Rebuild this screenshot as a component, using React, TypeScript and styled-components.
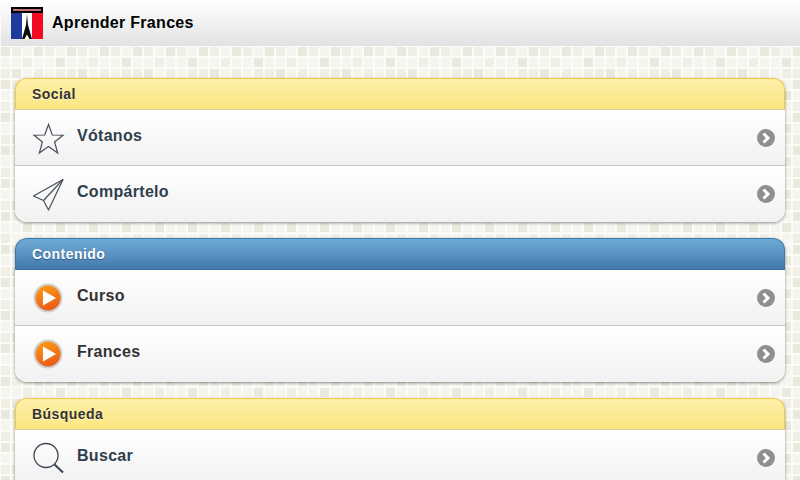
import * as React from 'react';
import styled, { createGlobalStyle } from 'styled-components';

const tile = (x: number, y: number, fill: string) =>
    `<rect x='${x * 11 + 1}' y='${y * 11 + 1}' width='9' height='9' fill='${fill}'/>`;

const darkCells = [[0, 0], [3, 0], [5, 1], [1, 2], [4, 3], [2, 4], [5, 4], [0, 3]];
const midCells = [[1, 0], [4, 0], [2, 1], [0, 2], [3, 2], [1, 3], [5, 2], [3, 5], [0, 5]];

const buildPattern = () => {
    let cells = '';
    for (let y = 0; y < 6; y++) {
        for (let x = 0; x < 6; x++) {
            const dark = darkCells.some(c => c[0] === x && c[1] === y);
            const mid = midCells.some(c => c[0] === x && c[1] === y);
            cells += tile(x, y, dark ? '#e9e9de' : mid ? '#efefe6' : '#f5f5ef');
        }
    }
    const svg = `<svg xmlns='http://www.w3.org/2000/svg' width='66' height='66'><rect width='66' height='66' fill='#fbfbf7'/>${cells}</svg>`;
    return `url("data:image/svg+xml,${encodeURIComponent(svg)}")`;
};

const GlobalStyle = createGlobalStyle`
    html, body {
        margin: 0;
        padding: 0;
        height: 100%;
        overflow: hidden;
    }
    body {
        font-family: "Liberation Sans", Arial, sans-serif;
    }
`;

const Page = styled.div<{ $pattern: string }>`
    width: 800px;
    height: 480px;
    overflow: hidden;
    background-color: #f5f5ef;
    background-image: ${p => p.$pattern};
    background-position: 0 46px;
`;

const Header = styled.header`
    height: 45px;
    margin-left: 1px;
    border-bottom: 1px solid #e2e2e2;
    background: linear-gradient(#ffffff, #e3e3e3);
    display: flex;
    align-items: center;
    padding-left: 10px;
    gap: 9px;
`;

const Title = styled.h1`
    margin: 0;
    font-size: 16px;
    font-weight: 700;
    color: #000;
    letter-spacing: 0.3px;
`;

const Content = styled.main`
    padding: 32px 15px 0;
    display: flex;
    flex-direction: column;
    gap: 16px;
`;

const Group = styled.section`
    border-radius: 12px;
    box-shadow: 0 1px 3px rgba(0, 0, 0, 0.45);
    background: #fff;
`;

const GroupHead = styled.div<{ $blue?: boolean }>`
    height: 30px;
    box-sizing: content-box;
    padding-left: 16px;
    display: flex;
    align-items: center;
    font-size: 14px;
    font-weight: 700;
    letter-spacing: 0.45px;
    border-radius: 12px 12px 0 0;
    border: 1px solid ${p => (p.$blue ? '#3f78a8' : '#f7c842')};
    border-bottom: 1px solid ${p => (p.$blue ? '#3d6f9c' : '#d8d2a8')};
    color: ${p => (p.$blue ? '#fff' : '#333')};
    text-shadow: ${p => (p.$blue ? '0 1px 1px #2a5a85' : '0 1px 0 #fff8c8')};
    background: ${p =>
        p.$blue
            ? 'linear-gradient(#6fabd8, #4479ab)'
            : 'linear-gradient(#fdf0a8, #fce681)'};
`;

const Row = styled.div`
    height: 55px;
    display: flex;
    align-items: center;
    padding: 0 10px 0 16px;
    background: linear-gradient(#ffffff, #f1f1f1);
    border-bottom: 1px solid #c4c4c4;

    &:last-child {
        border-bottom: none;
        height: 56px;
        border-radius: 0 0 12px 12px;
    }
`;

const IconSlot = styled.div`
    width: 34px;
    height: 34px;
    margin-right: 12px;
    display: flex;
    align-items: center;
    justify-content: center;
    flex: none;
`;

const Label = styled.span<{ $dark?: boolean }>`
    flex: 1;
    font-size: 16px;
    font-weight: 700;
    letter-spacing: 0.3px;
    color: ${p => (p.$dark ? '#333333' : '#2f3e4c')};
    position: relative;
    top: -2px;
`;

const ArrowBadge = styled.div`
    width: 18px;
    height: 18px;
    border-radius: 50%;
    background: #8f8f8f;
    display: flex;
    align-items: center;
    justify-content: center;
    flex: none;
`;

const Flag = () => (
    <svg width="32" height="32" viewBox="0 0 32 32">
        <rect width="32" height="32" fill="#fff" />
        <rect y="5" width="11" height="27" fill="#1d3a9c" />
        <rect x="21" y="5" width="11" height="27" fill="#f50a24" />
        <rect width="32" height="6" fill="#000" />
        <rect x="2" y="2" width="28" height="2" fill="#c07070" />
        <path
            d="M16 7 L17 18 L19 25 L21 32 L18.5 32 L16 27.5 L13.5 32 L11 32 L13 25 L15 18 Z"
            fill="#0b0b0b"
        />
    </svg>
);

const StarIcon = () => (
    <svg width="34" height="34" viewBox="0 0 34 34" fill="none" stroke="#46505c" strokeWidth="1.2">
        <path d="M17.5 3.5 L21.3 14 L32 14.2 L23.6 21 L26.7 32 L17.5 25.6 L8.3 32 L11.4 21 L3 14.2 L13.7 14 Z" />
    </svg>
);

const SendIcon = () => (
    <svg width="34" height="34" viewBox="0 0 34 34" fill="none" stroke="#46505c" strokeWidth="1.2" strokeLinejoin="round">
        <path d="M32 2.5 L2.5 19 L12.5 23.5 L17.5 33 Z" />
        <path d="M32 2.5 L12.5 23.5" />
    </svg>
);

const SearchIcon = () => (
    <svg width="34" height="34" viewBox="0 0 34 34" fill="none" stroke="#3c4856">
        <circle cx="15" cy="14.5" r="12" strokeWidth="1.3" />
        <path d="M23.5 23.5 L32 31.5" strokeWidth="2.2" />
    </svg>
);

const PlayIcon = () => (
    <svg width="30" height="30" viewBox="0 0 30 30">
        <defs>
            <linearGradient id="playFill" x1="0.3" y1="0" x2="0.6" y2="1">
                <stop offset="0" stopColor="#fb9a14" />
                <stop offset="1" stopColor="#ea5a18" />
            </linearGradient>
        </defs>
        <circle cx="15" cy="15" r="14.5" fill="#cfcfcf" />
        <circle cx="15" cy="15" r="12.5" fill="url(#playFill)" />
        <path d="M10 7.5 L23 15 L10 22.5 Z" fill="#fff" />
    </svg>
);

const Chevron = () => (
    <svg width="10" height="12" viewBox="0 0 10 12" fill="none" stroke="#fff" strokeWidth="3">
        <path d="M2.5 1.5 L7 6 L2.5 10.5" />
    </svg>
);

type MenuRowProps = {
    icon: React.ReactNode;
    label: string;
    dark?: boolean;
};

const MenuRow = ({ icon, label, dark }: MenuRowProps) => (
    <Row>
        <IconSlot>{icon}</IconSlot>
        <Label $dark={dark}>{label}</Label>
        <ArrowBadge>
            <Chevron />
        </ArrowBadge>
    </Row>
);

const App = () => {
    const pattern = React.useMemo(buildPattern, []);
    return (
        <Page $pattern={pattern}>
            <GlobalStyle />
            <Header>
                <Flag />
                <Title>Aprender Frances</Title>
            </Header>
            <Content>
                <Group>
                    <GroupHead>Social</GroupHead>
                    <MenuRow icon={<StarIcon />} label="Vótanos" />
                    <MenuRow icon={<SendIcon />} label="Compártelo" />
                </Group>
                <Group>
                    <GroupHead $blue>Contenido</GroupHead>
                    <MenuRow icon={<PlayIcon />} label="Curso" dark />
                    <MenuRow icon={<PlayIcon />} label="Frances" dark />
                </Group>
                <Group>
                    <GroupHead>Búsqueda</GroupHead>
                    <MenuRow icon={<SearchIcon />} label="Buscar" />
                    <MenuRow icon={<SearchIcon />} label="Buscar" />
                </Group>
            </Content>
        </Page>
    );
};

export default App;
